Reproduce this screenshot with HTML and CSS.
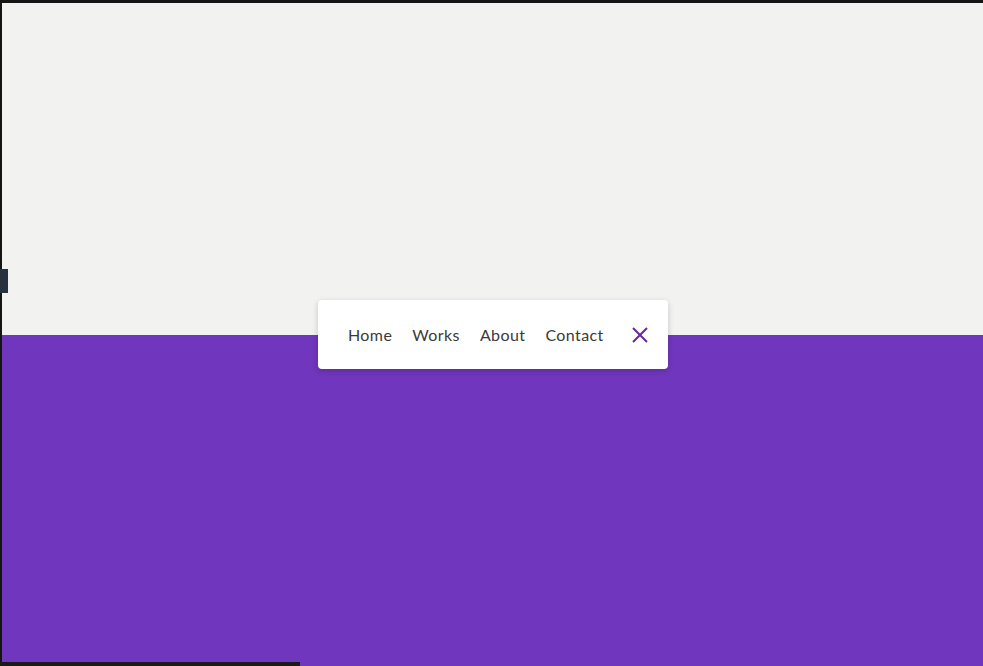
FILE: index.html
```html
<!DOCTYPE html>
<html>
<head>
<meta charset="utf-8">
<link rel="stylesheet" href="styles.css">
</head>
<body>
<div class="frame">
  <div class="top"></div>
  <div class="bottom"></div>
  <div class="tab"></div>
  <div class="bar"></div>
  <nav class="menu">
    <a class="link">Home</a>
    <a class="link">Works</a>
    <a class="link">About</a>
    <a class="link">Contact</a>
    <span class="close">
      <svg width="18" height="18" viewBox="0 0 18 18"><path d="M2 2L16 16M16 2L2 16" stroke="#67289a" stroke-width="2" fill="none"/></svg>
    </span>
  </nav>
</div>
</body>
</html>
```
FILE: styles.css
```css
html, body { margin: 0; padding: 0; }
body { background: #151515; width: 983px; height: 666px; overflow: hidden; font-family: Lato, "Open Sans", sans-serif; }
.frame { position: relative; height: 663px; margin-top: 3px; margin-left: 2px; display: flex; flex-direction: column; }
.top { height: 332px; background: #f2f2f0; }
.bottom { flex: 1; background: #7036bd; }
.tab { position: absolute; left: -2px; top: 266px; width: 8px; height: 24px; background: #28323c; }
.bar { position: absolute; left: -2px; bottom: 0; width: 300px; height: 4px; background: #1a1a1a; }
.menu { position: absolute; left: 316px; top: 297px; width: 350px; height: 69px; box-sizing: border-box; background: #fff; border-radius: 4px; box-shadow: 0 2px 6px rgba(0,0,0,0.18); display: flex; align-items: center; padding-left: 30px; gap: 20px; }
.link { font-size: 16px; color: #3a3a3a; letter-spacing: 0.4px; }
.close { display: flex; margin-left: 7px; }
```
